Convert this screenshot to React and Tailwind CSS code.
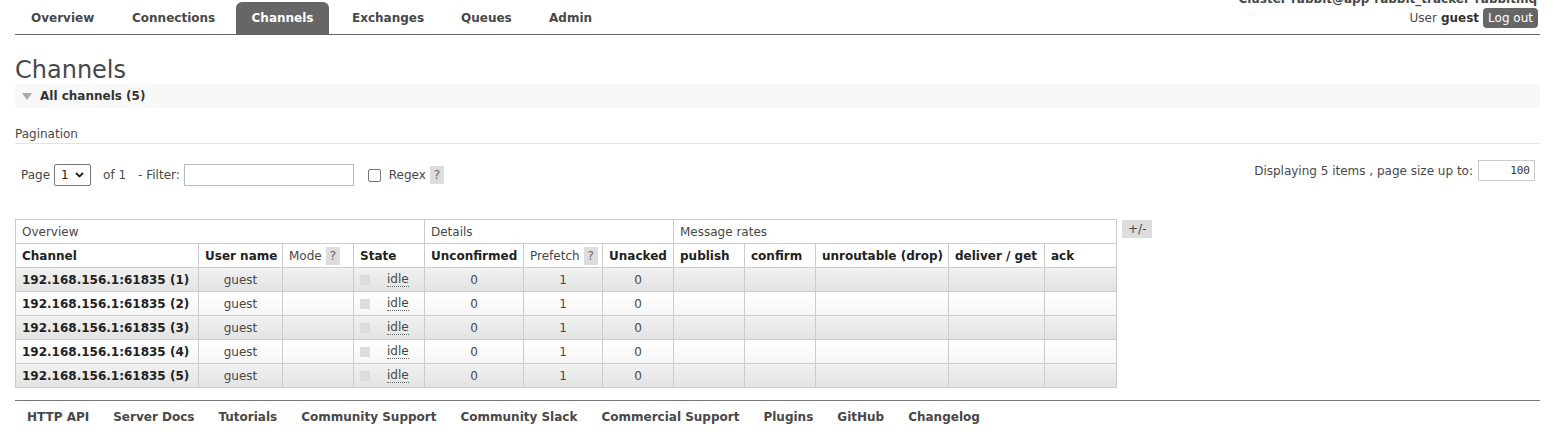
import React from 'react';

const tabs = [
  { label: 'Overview', w: 'w-[101px]' },
  { label: 'Connections', w: 'w-[120px]' },
  { label: 'Channels', w: 'w-[93px]', active: true },
  { label: 'Exchanges', w: 'w-[109px] ml-[7px]' },
  { label: 'Queues', w: 'w-[88px]' },
  { label: 'Admin', w: 'w-[80px]' },
];

const footerLinks = [
  'HTTP API',
  'Server Docs',
  'Tutorials',
  'Community Support',
  'Community Slack',
  'Commercial Support',
  'Plugins',
  'GitHub',
  'Changelog',
];

const channels = [1, 2, 3, 4, 5].map((n) => ({
  name: `192.168.156.1:61835 (${n})`,
  user: 'guest',
  unconfirmed: 0,
  prefetch: 1,
  unacked: 0,
}));

const Help = () => (
  <span className="inline-block bg-[#ddd] text-[#666] px-[4px] leading-[18px] ml-[4px] font-normal">?</span>
);

const cell = 'border border-[#ccc] h-[24px] px-[6px] whitespace-nowrap';

const App = () => {
  return (
    <div className="min-h-[438px] bg-white text-[12px] text-[#484848] px-[15px] pr-[16px] overflow-hidden" style={{ fontFamily: '"DejaVu Sans", Verdana, sans-serif' }}>
      {/* Header / nav */}
      <div className="flex items-end justify-between border-b border-[#666] h-[35px]">
        <ul className="flex items-end h-full">
          {tabs.map((t) => (
            <li
              key={t.label}
              className={`${t.w} h-[32px] flex items-center font-bold ${
                t.active ? 'bg-[#666] text-white rounded-t-[6px] justify-center' : 'pl-[16px] text-[#484848]'
              }`}
            >
              {t.label}
            </li>
          ))}
        </ul>
        <div className="flex flex-col items-end self-start">
          <div className="font-bold text-[#484848] -mt-[8px] leading-[14px] pr-[3px]">Cluster rabbit@app-rabbit_tracker-rabbitmq</div>
          <div className="flex items-center mt-[2px] pr-[2px]">
            <span>User</span>
            <span className="font-bold ml-[4px] text-[#333]">guest</span>
            <span className="ml-[4px] bg-[#666] text-white rounded-[4px] px-[5px] h-[20px] leading-[20px]">Log out</span>
          </div>
        </div>
      </div>

      {/* Title */}
      <h1 className="text-[24px] leading-[28px] mt-[21px] text-[#484848]">Channels</h1>

      {/* Section */}
      <div className="bg-[#f8f8f8] h-[24px] flex items-center">
        <svg width="10" height="7" viewBox="0 0 10 7" className="ml-[7px] mr-[8px]">
          <path d="M0 0 L10 0 L5 7 Z" fill="#aaa" />
        </svg>
        <span className="font-bold text-[#333]">All channels (5)</span>
      </div>

      {/* Pagination */}
      <div className="mt-[19px] border-b border-[#e4e4e4] pb-[2px] leading-[14px]">Pagination</div>

      <div className="flex justify-between items-start mt-[16px]">
        <div className="flex items-center mt-[4px] pl-[6px]">
          <span>Page</span>
          <span className="ml-[4px] w-[37px] h-[22px] border border-[#767676] rounded-[2px] flex items-center justify-between px-[6px] text-[#222]">
            1
            <svg width="9" height="6" viewBox="0 0 9 6">
              <path d="M1 1 L4.5 4.5 L8 1" stroke="#222" strokeWidth="1.8" fill="none" />
            </svg>
          </span>
          <span className="ml-[12px]">of 1</span>
          <span className="ml-[12px]">- Filter:</span>
          <span className="ml-[4px] w-[170px] h-[22px] border border-[#bbb]" />
          <span className="ml-[14px] w-[13px] h-[13px] border border-[#767676] rounded-[2px] bg-white" />
          <span className="ml-[8px]">Regex</span>
          <Help />
        </div>
        <div className="flex items-center mr-[5px]">
          <span>Displaying 5 items , page size up to:</span>
          <span className="ml-[5px] w-[57px] h-[21px] border border-[#ccc] text-right pr-[4px] leading-[19px] text-[#333]" style={{ fontFamily: '"DejaVu Sans Mono", monospace', fontSize: '11px' }}>100</span>
        </div>
      </div>

      {/* Table */}
      <div className="flex items-start mt-[33px]">
        <table className="border-collapse table-fixed w-[1101px]">
          <colgroup>
            {[183, 84, 71, 71, 99, 79, 71, 71, 71, 133, 96, 72].map((w, i) => (
              <col key={i} style={{ width: w }} />
            ))}
          </colgroup>
          <thead>
            <tr>
              <th colSpan={4} className={`${cell} font-normal text-left h-[23px]`}>Overview</th>
              <th colSpan={3} className={`${cell} font-normal text-left h-[23px]`}>Details</th>
              <th colSpan={5} className={`${cell} font-normal text-left h-[23px]`}>Message rates</th>
            </tr>
            <tr className="text-[#222]">
              <th className={`${cell} text-left`}>Channel</th>
              <th className={`${cell} text-left`}>User name</th>
              <th className={`${cell} text-left font-normal text-[#484848]`}>Mode<Help /></th>
              <th className={`${cell} text-left`}>State</th>
              <th className={`${cell} text-left`}>Unconfirmed</th>
              <th className={`${cell} text-left font-normal text-[#484848]`}>Prefetch<Help /></th>
              <th className={`${cell} text-left`}>Unacked</th>
              <th className={`${cell} text-left`}>publish</th>
              <th className={`${cell} text-left`}>confirm</th>
              <th className={`${cell} text-left`}>unroutable (drop)</th>
              <th className={`${cell} text-left`}>deliver / get</th>
              <th className={`${cell} text-left`}>ack</th>
            </tr>
          </thead>
          <tbody>
            {channels.map((c, i) => {
              const bg = i % 2 === 0 ? 'bg-gradient-to-b from-[#f2f2f2] to-[#e2e2e2]' : 'bg-gradient-to-b from-white to-[#f6f6f6]';
              return (
                <tr key={c.name} className={bg}>
                  <td className={`${cell} font-bold text-[#222]`}>{c.name}</td>
                  <td className={`${cell} text-center`}>{c.user}</td>
                  <td className={cell} />
                  <td className={cell}>
                    <div className="flex items-center">
                      <span className="w-[10px] h-[10px] bg-[#ddd]" />
                      <span className="ml-[17px] border-b border-dotted border-[#666] leading-[14px]">idle</span>
                    </div>
                  </td>
                  <td className={`${cell} text-center`}>{c.unconfirmed}</td>
                  <td className={`${cell} text-center`}>{c.prefetch}</td>
                  <td className={`${cell} text-center`}>{c.unacked}</td>
                  <td className={cell} />
                  <td className={cell} />
                  <td className={cell} />
                  <td className={cell} />
                  <td className={cell} />
                </tr>
              );
            })}
          </tbody>
        </table>
        <span className="ml-[5px] mt-[1px] bg-[#ddd] text-[#484848] px-[6px] h-[18px] leading-[18px]">+/-</span>
      </div>

      {/* Footer */}
      <div className="mt-[12px] border-t border-[#777] flex gap-[24px] pl-[12px] pt-[7px] font-bold text-[#484848]">
        {footerLinks.map((l) => (
          <span key={l}>{l}</span>
        ))}
      </div>
    </div>
  );
};

export default App;
